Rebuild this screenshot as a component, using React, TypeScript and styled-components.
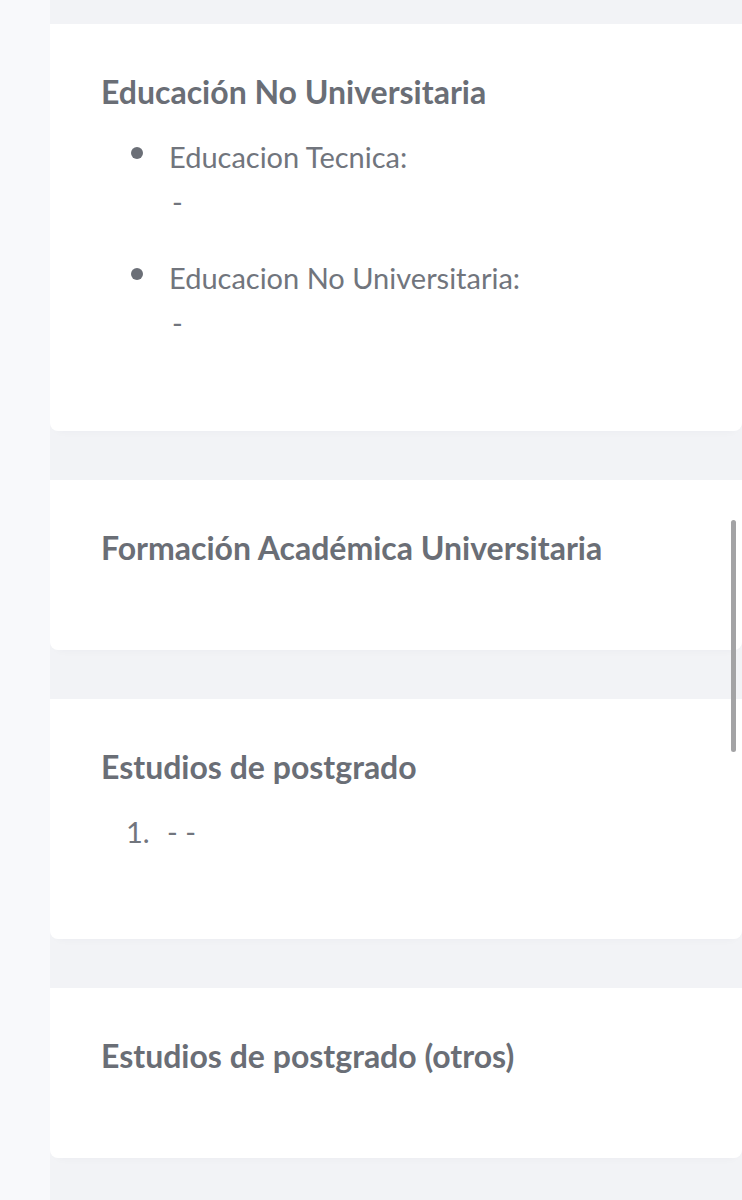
import React from 'react'
import styled, { createGlobalStyle } from 'styled-components'

const GlobalStyle = createGlobalStyle`
  html, body {
    margin: 0;
    padding: 0;
    background: #f2f3f6;
  }
  * {
    box-sizing: border-box;
  }
`

type Item = { label: string; value: string }

const noUniversitaria: Item[] = [
  { label: 'Educacion Tecnica:', value: '-' },
  { label: 'Educacion No Universitaria:', value: '-' },
]

const App = () => (
  <>
    <GlobalStyle />
    <Page>
      <Rail />
      <Main>
        <Card>
          <Title>Educación No Universitaria</Title>
          <BulletList>
            {noUniversitaria.map((item) => (
              <Bullet key={item.label}>
                <Label>{item.label}</Label>
                <Value>{item.value}</Value>
              </Bullet>
            ))}
          </BulletList>
        </Card>
        <Card>
          <Title>Formación Académica Universitaria</Title>
        </Card>
        <Card $bottom={54}>
          <Title>Estudios de postgrado</Title>
          <NumberList>
            <li>- -</li>
          </NumberList>
        </Card>
        <Card>
          <Title>Estudios de postgrado (otros)</Title>
        </Card>
      </Main>
      <Scrollbar />
    </Page>
  </>
)

export default App

const Page = styled.div`
  position: relative;
  display: flex;
  width: 742px;
  min-height: 1200px;
  overflow: hidden;
  font-family: 'Lato', 'Noto Sans', sans-serif;
`

const Rail = styled.div`
  width: 50px;
  flex-shrink: 0;
  background: #f8f9fb;
`

const Main = styled.div`
  flex: 1;
  display: flex;
  flex-direction: column;
  gap: 49px;
  padding-top: 24px;
  background: #f2f3f6;
`

const Card = styled.section<{ $bottom?: number }>`
  background: #ffffff;
  border-radius: 0 0 8px 8px;
  box-shadow: 0 6px 10px -8px rgba(40, 50, 80, 0.06);
  padding: 50px 24px ${({ $bottom }) => $bottom ?? 55}px 51px;
`

const Title = styled.h2`
  margin: 0 0 29px;
  font-size: 32px;
  line-height: 36px;
  font-weight: 700;
  color: #6a6e76;
`

const BulletList = styled.ul`
  margin: 0;
  padding: 0 0 0 68px;
  list-style: none;
`

const Bullet = styled.li`
  position: relative;
  margin-bottom: 40px;
  color: #71757d;
  font-size: 29px;
  line-height: 36px;
  font-weight: 400;

  &:last-child {
    margin-bottom: 35px;
  }

  &::before {
    content: '';
    position: absolute;
    left: -38px;
    top: 8px;
    width: 12px;
    height: 12px;
    border-radius: 50%;
    background: #6b6f77;
  }
`

const Label = styled.div``

const Value = styled.div`
  margin-top: 9px;
  padding-left: 3px;
`

const NumberList = styled.ol`
  margin: 0 0 35px;
  padding: 0 0 0 56px;
  color: #71757d;
  font-size: 29px;
  line-height: 36px;

  li {
    padding-left: 10px;
  }
`

const Scrollbar = styled.div`
  position: absolute;
  right: 6px;
  top: 520px;
  width: 5px;
  height: 232px;
  border-radius: 3px;
  background: #a3a3a5;
`
